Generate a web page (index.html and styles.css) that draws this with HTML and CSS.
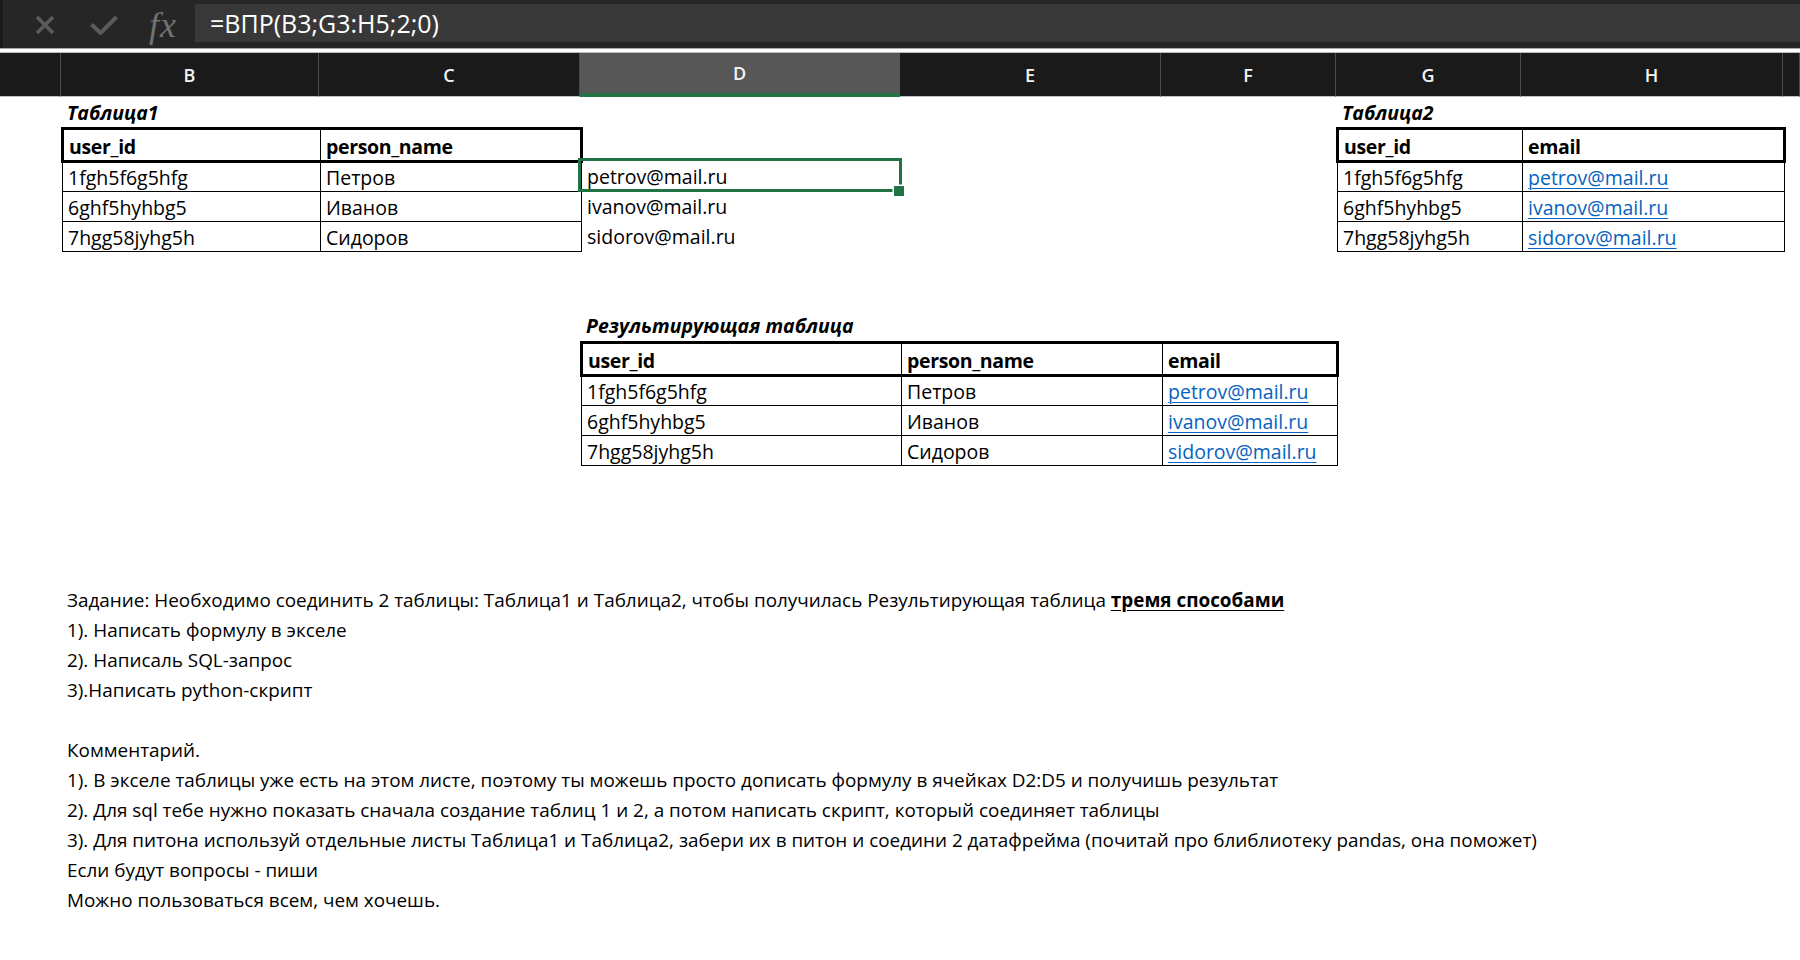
FILE: index.html
```html
<!DOCTYPE html>
<html lang="ru">
<head>
<meta charset="utf-8">
<title>ВПР</title>
<link rel="stylesheet" href="styles.css">
</head>
<body>
<div class="formula-bar">
  <div class="fb-tools">
    <svg class="ic-x" width="20" height="20" viewBox="0 0 20 20"><path d="M2 2 L18 18 M18 2 L2 18" stroke="#5b5b5b" stroke-width="3.6" fill="none"/></svg>
    <svg class="ic-ok" width="28" height="20" viewBox="0 0 28 20"><path d="M1.5 9.5 L10.5 18 L26.5 2" stroke="#5b5b5b" stroke-width="4" fill="none"/></svg>
    <span class="fx">fx</span>
  </div>
  <div class="fb-input">=ВПР(B3;G3:H5;2;0)</div>
</div>
<div class="fb-sep"></div>
<div class="col-headers">
  <div class="ch"></div>
  <div class="ch">B</div>
  <div class="ch">C</div>
  <div class="ch sel">D</div>
  <div class="ch">E</div>
  <div class="ch">F</div>
  <div class="ch">G</div>
  <div class="ch">H</div>
  <div class="ch"></div>
</div>
<div class="sheet">
  <div class="cell label c-b r1">Таблица1</div>
  <table class="xt t1">
    <colgroup><col class="w258"><col class="w261"></colgroup>
    <tr class="hr"><th>user_id</th><th>person_name</th></tr>
    <tr class="dr"><td>1fgh5f6g5hfg</td><td>Петров</td></tr>
    <tr class="dr"><td>6ghf5hyhbg5</td><td>Иванов</td></tr>
    <tr class="dr"><td>7hgg58jyhg5h</td><td>Сидоров</td></tr>
  </table>
  <div class="cell c-d r3 active">petrov@mail.ru<span class="sel-box"></span><span class="sel-handle"></span></div>
  <div class="cell c-d r4">ivanov@mail.ru</div>
  <div class="cell c-d r5">sidorov@mail.ru</div>

  <div class="cell label c-g r1">Таблица2</div>
  <table class="xt t2">
    <colgroup><col class="w185"><col class="w262"></colgroup>
    <tr class="hr"><th>user_id</th><th>email</th></tr>
    <tr class="dr"><td>1fgh5f6g5hfg</td><td><a class="lnk">petrov@mail.ru</a></td></tr>
    <tr class="dr"><td>6ghf5hyhbg5</td><td><a class="lnk">ivanov@mail.ru</a></td></tr>
    <tr class="dr"><td>7hgg58jyhg5h</td><td><a class="lnk">sidorov@mail.ru</a></td></tr>
  </table>

  <div class="cell label c-d r8">Результирующая таблица</div>
  <table class="xt res">
    <colgroup><col class="w320"><col class="w261"><col class="w175"></colgroup>
    <tr class="hr"><th>user_id</th><th>person_name</th><th>email</th></tr>
    <tr class="dr"><td>1fgh5f6g5hfg</td><td>Петров</td><td><a class="lnk">petrov@mail.ru</a></td></tr>
    <tr class="dr"><td>6ghf5hyhbg5</td><td>Иванов</td><td><a class="lnk">ivanov@mail.ru</a></td></tr>
    <tr class="dr"><td>7hgg58jyhg5h</td><td>Сидоров</td><td><a class="lnk">sidorov@mail.ru</a></td></tr>
  </table>

  <div class="notes">
    <div class="ln">Задание: Необходимо соединить 2 таблицы: Таблица1 и Таблица2, чтобы получилась Результирующая таблица <b class="u">тремя способами</b></div>
    <div class="ln">1). Написать формулу в экселе</div>
    <div class="ln">2). Написаль SQL-запрос</div>
    <div class="ln">3).Написать python-скрипт</div>
    <div class="ln"></div>
    <div class="ln">Комментарий.</div>
    <div class="ln">1). В экселе таблицы уже есть на этом листе, поэтому ты можешь просто дописать формулу в ячейках D2:D5 и получишь результат</div>
    <div class="ln">2). Для sql тебе нужно показать сначала создание таблиц 1 и 2, а потом написать скрипт, который соединяет таблицы</div>
    <div class="ln">3). Для питона используй отдельные листы Таблица1 и Таблица2, забери их в питон и соедини 2 датафрейма (почитай про блиблиотеку pandas, она поможет)</div>
    <div class="ln">Если будут вопросы - пиши</div>
    <div class="ln">Можно пользоваться всем, чем хочешь.</div>
  </div>
</div>
</body>
</html>
```

FILE: styles.css
```css
* { box-sizing: border-box; }
html, body { margin: 0; padding: 0; }
body {
  width: 1800px;
  height: 960px;
  overflow: hidden;
  background: #ffffff;
  color: #000;
  font-family: "Open Sans", "Liberation Sans", sans-serif;
}

/* formula bar */
.formula-bar {
  display: flex;
  align-items: flex-start;
  height: 48px;
  padding-top: 4px;
  background: #262626;
  box-shadow: inset 3px 0 0 #1a1a1a;
}
.fb-tools {
  width: 195px;
  height: 42px;
  display: flex;
  align-items: center;
  padding-left: 35px;
}
.ic-x { flex: none; }
.ic-ok { flex: none; margin-left: 35px; }
.fx {
  margin-left: 31px;
  font-family: "Liberation Serif", "DejaVu Serif", serif;
  font-style: italic;
  font-size: 36px;
  color: #727272;
  line-height: 1;
  letter-spacing: 1px;
}
.fb-input {
  flex: 1;
  height: 38px;
  background: #383838;
  color: #ffffff;
  font-size: 25px;
  line-height: 38px;
  padding-left: 15px;
  white-space: nowrap;
}
.fb-sep {
  height: 5px;
  background: linear-gradient(#a9a9a9 0 1px, #ffffff 1px 4px, #bcbcbc 4px);
}

/* column headers */
.col-headers, .sheet {
  display: grid;
  grid-template-columns: 61px 258px 261px 320px 261px 175px 185px 262px 1fr;
}
.col-headers {
  height: 44px;
  background: #1a1a1a;
}
.ch {
  display: flex;
  align-items: center;
  justify-content: center;
  border-right: 1px solid #4d4d4d;
  border-bottom: 1px solid #c2c2c2;
  color: #f4f4f4;
  font-size: 18px;
  font-weight: 600;
}
.ch.sel {
  background: #575757;
  border-right-color: #575757;
  border-bottom: 4px solid #217346;
}

/* sheet grid */
.sheet {
  grid-template-rows: 30px 33px 30px 30px 30px 30px 30px 31px 32px 31px 30px 30px repeat(18, 30px);
  font-size: 19.5px;
}
.cell {
  height: 30px;
  line-height: 30px;
  padding: 2px 0 0 7px;
  white-space: nowrap;
}
.label { font-weight: 700; font-style: italic; padding-left: 6px; padding-top: 1px; }
.c-b { grid-column: 2; }
.c-d { grid-column: 4; }
.c-g { grid-column: 7; }
.r1 { grid-row: 1; }
.r3 { grid-row: 3; }
.r4 { grid-row: 4; }
.r5 { grid-row: 5; }
.r8 { grid-row: 8; }

.active { position: relative; }
.sel-box {
  position: absolute;
  left: -2px; top: -2px; right: -2px; bottom: -2px;
  border: 3px solid #217346;
}
.sel-handle {
  position: absolute;
  width: 10px; height: 10px;
  right: -4px; bottom: -6px;
  background: #217346;
  box-shadow: 0 0 0 1.5px #ffffff;
}

/* excel tables */
.xt {
  border-collapse: collapse;
  table-layout: fixed;
  width: 100%;
  align-self: start;
}
.t1 { grid-column: 2 / 4; grid-row: 2 / 6; }
.t2 { grid-column: 7 / 9; grid-row: 2 / 6; }
.res { grid-column: 4 / 7; grid-row: 9 / 13; }
.w258 { width: 258px; }
.w261 { width: 261px; }
.w185 { width: 185px; }
.w262 { width: 262px; }
.w320 { width: 320px; }
.w175 { width: 175px; }
.xt .hr { height: 33px; }
.xt .dr { height: 30px; }
.xt th, .xt td {
  border: 1px solid #000;
  padding: 0 4px 4px 5px;
  vertical-align: bottom;
  text-align: left;
  line-height: 1;
  white-space: nowrap;
  overflow: hidden;
  font-size: 19.5px;
}
.xt th {
  font-weight: 700;
  letter-spacing: -0.35px;
  border-top: 3px solid #000;
  border-bottom: 3px solid #000;
}
.xt th:first-child { border-left: 3px solid #000; }
.xt th:last-child { border-right: 3px solid #000; }
.lnk {
  color: #0563c1;
  text-decoration: underline;
  text-underline-offset: 3px;
  text-decoration-thickness: 1px;
}

/* notes */
.notes {
  grid-column: 2 / -1;
  grid-row: 17 / 28;
  display: flex;
  flex-direction: column;
  font-size: 18.9px;
}
.ln {
  height: 30px;
  line-height: 30px;
  padding: 1px 0 0 6px;
  white-space: nowrap;
}
.u { font-weight: 700; text-decoration: underline; text-underline-offset: 3px; }
```
